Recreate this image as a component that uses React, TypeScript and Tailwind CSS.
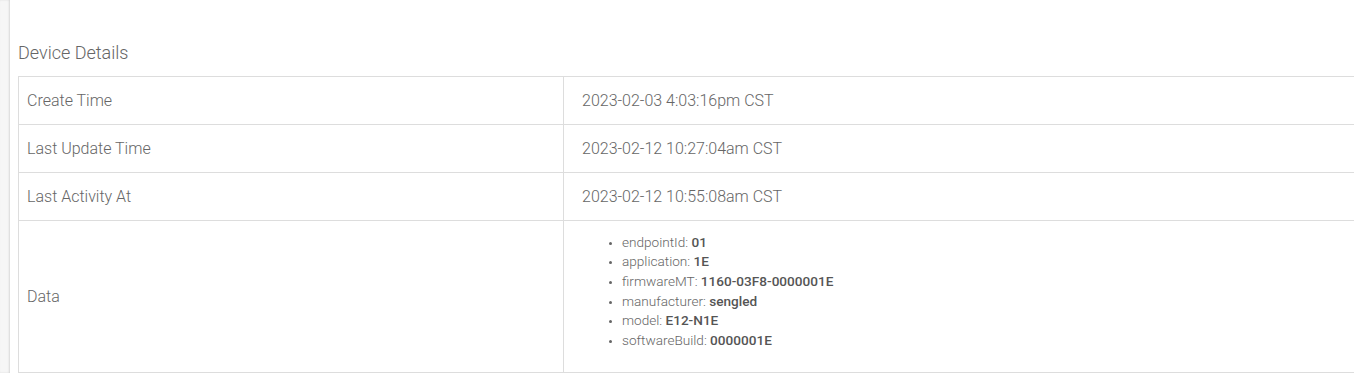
import React from "react";

const rows: [string, string][] = [
  ["Create Time", "2023-02-03 4:03:16pm CST"],
  ["Last Update Time", "2023-02-12 10:27:04am CST"],
  ["Last Activity At", "2023-02-12 10:55:08am CST"],
];

const data: [string, string][] = [
  ["endpointId", "01"],
  ["application", "1E"],
  ["firmwareMT", "1160-03F8-0000001E"],
  ["manufacturer", "sengled"],
  ["model", "E12-N1E"],
  ["softwareBuild", "0000001E"],
];

export default function App() {
  return (
    <div
      className="flex h-[373px] w-[1354px] overflow-hidden bg-white font-light text-[#666]"
      style={{ fontFamily: "Roboto, 'Liberation Sans', sans-serif" }}
    >
      <div className="w-[10px] shrink-0 bg-[#f6f6f6] shadow-[inset_-1px_0_2px_rgba(0,0,0,0.12)]" />
      <div className="min-w-0 flex-1 pl-[8px] pt-[41px]">
        <h2 className="text-[18px] leading-[24px] font-light text-[#666]">Device Details</h2>
        <table className="mt-[11px] w-[1400px] border-collapse text-[16px]">
          <tbody>
            {rows.map(([k, v], i) => (
              <tr key={k} className={i === 0 ? "h-[48px]" : "h-[48px]"}>
                <td className="w-[545px] border border-[#ddd] pl-[8px] align-middle">{k}</td>
                <td className="border border-[#ddd] pl-[18px] align-middle">{v}</td>
              </tr>
            ))}
            <tr className="h-[152px]">
              <td className="w-[545px] border border-[#ddd] pl-[8px] align-middle">Data</td>
              <td className="border border-[#ddd] pb-[10px] pl-[18px] align-middle">
                <ul className="list-disc pl-[40px] text-[13.6px] leading-[19.6px]">
                  {data.map(([k, v]) => (
                    <li key={k} className="marker:text-[10px]">
                      {k}: <b className="font-medium text-[#555]">{v}</b>
                    </li>
                  ))}
                </ul>
              </td>
            </tr>
          </tbody>
        </table>
      </div>
    </div>
  );
}
